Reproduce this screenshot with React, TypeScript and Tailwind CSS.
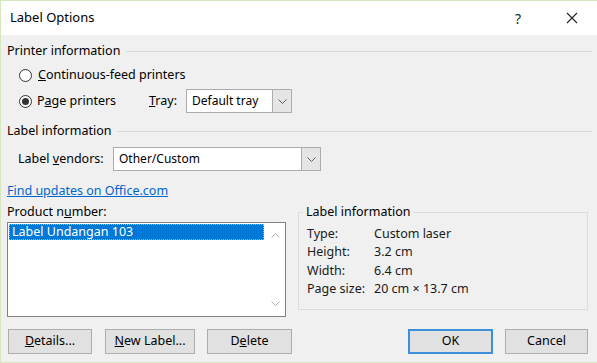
import React from 'react';

const font = { fontFamily: '"Noto Sans", "Open Sans", sans-serif' };

const Chevron: React.FC<{ up?: boolean; color?: string }> = ({ up, color = '#606060' }) => (
  <svg width="9" height="5" viewBox="0 0 9 5" fill="none">
    <path d={up ? 'M0.5 4.5 L4.5 0.5 L8.5 4.5' : 'M0.5 0.5 L4.5 4.5 L8.5 0.5'} stroke={color} strokeWidth="1" />
  </svg>
);

const Combo: React.FC<{ value: string; width: string }> = ({ value, width }) => (
  <div className={`flex h-[24px] ${width} border border-[#acacac] bg-white`}>
    <div className="flex flex-1 items-center pl-[5px] text-[12px] text-black">{value}</div>
    <div className="flex w-[19px] items-center justify-center border-l border-[#acacac] bg-[#e5e5e5]">
      <Chevron />
    </div>
  </div>
);

const Radio: React.FC<{ checked?: boolean }> = ({ checked }) => (
  <span className="flex h-[13px] w-[13px] items-center justify-center rounded-full border border-[#333333] bg-white">
    {checked && <span className="h-[7px] w-[7px] rounded-full bg-[#333333]" />}
  </span>
);

const SectionHeader: React.FC<{ title: string; className?: string }> = ({ title, className = '' }) => (
  <div className={`mr-[-4px] flex h-[16px] items-center ${className}`}>
    <span className="text-[12.5px] text-black">{title}</span>
    <div className="ml-[6px] h-px flex-1 bg-[#dadada]" />
  </div>
);

const Btn: React.FC<{ children: React.ReactNode; width?: string; primary?: boolean }> = ({ children, width = 'w-[85px]', primary }) => (
  <button
    className={`flex h-[25px] ${width} items-center justify-center bg-[#e1e1e1] text-[12.5px] text-black ${
      primary ? 'border-2 border-[#3c8fd8]' : 'border border-[#adadad]'
    }`}
  >
    {children}
  </button>
);

const InfoRow: React.FC<{ label: string; value: string }> = ({ label, value }) => (
  <div className="flex h-[18.5px] items-center text-[12.5px] text-[#1a1a1a]">
    <span className="w-[67px]">{label}</span>
    <span>{value}</span>
  </div>
);

const App: React.FC = () => {
  return (
    <div style={font} className="flex h-[363px] w-[597px] flex-col overflow-hidden border-b border-l border-t border-[#d6e6bf] bg-[#f0f0f0]">
      {/* title bar */}
      <div className="flex h-[34px] shrink-0 items-center bg-white">
        <span className="ml-[9px] text-[13px] text-black">Label Options</span>
        <div className="flex-1" />
        <span className="mr-[45px] text-[14px] text-[#222]">?</span>
        <svg className="mr-[19px]" width="12" height="12" viewBox="0 0 12 12">
          <path d="M1 1 L11 11 M11 1 L1 11" stroke="#222" strokeWidth="1.1" />
        </svg>
      </div>

      <div className="flex flex-1 flex-col pl-[6px] pr-[9px]">
        <SectionHeader title="Printer information" className="mt-[8px]" />

        <div className="mt-[4px] flex h-[24px] items-center pl-[12px] text-[12.5px] text-black">
          <Radio />
          <span className="ml-[6px]">
            <u>C</u>ontinuous-feed printers
          </span>
        </div>
        <div className="mt-[2px] flex h-[24px] items-center pl-[12px] text-[12.5px] text-black">
          <Radio checked />
          <span className="ml-[5px] w-[112px]">
            P<u>a</u>ge printers
          </span>
          <span className="w-[37px]">
            <u>T</u>ray:
          </span>
          <Combo value="Default tray" width="w-[106px]" />
        </div>

        <SectionHeader title="Label information" className="mt-[10px]" />

        <div className="mt-[8px] flex h-[24px] items-center pl-[11px] text-[12.5px] text-black">
          <span className="w-[95px]">
            Label <u>v</u>endors:
          </span>
          <Combo value="Other/Custom" width="w-[208px]" />
        </div>

        <div className="mt-[12px] flex h-[16px] items-center">
          <a className="text-[12.5px] text-[#0066cc] underline">Find updates on Office.com</a>
        </div>

        <div className="mt-[5px] flex gap-[12px]">
          <div className="flex w-[279px] flex-col">
            <div className="flex h-[16px] items-center text-[12.5px] text-black">
              Product n<u>u</u>mber:
            </div>
            <div className="mt-[2px] flex h-[95px] border border-[#828282] bg-white">
              <div className="flex-1 p-px">
                <div className="flex h-[16px] items-center border border-dotted border-[#8fb9e6] bg-[#0078d7] pl-[2px] text-[12.5px] text-white">
                  Label Undangan 103
                </div>
              </div>
              <div className="flex w-[20px] flex-col items-center justify-between py-[10px]">
                <Chevron up color="#b0b0b0" />
                <Chevron color="#b0b0b0" />
              </div>
            </div>
          </div>

          <fieldset className="mt-[-1px] h-[107px] flex-1 border border-[#dcdcdc] pl-[8px] pt-[3px]">
            <legend className="ml-[-4px] px-[3px] text-[12.5px] text-black">Label information</legend>
            <InfoRow label="Type:" value="Custom laser" />
            <InfoRow label="Height:" value="3.2 cm" />
            <InfoRow label="Width:" value="6.4 cm" />
            <InfoRow label="Page size:" value="20 cm × 13.7 cm" />
          </fieldset>
        </div>

        <div className="mt-[12px] flex items-center pl-px">
          <Btn width="w-[84px]">
            <u>D</u>etails...
          </Btn>
          <div className="ml-[13px]">
            <Btn width="w-[90px]">
              <u>N</u>ew Label...
            </Btn>
          </div>
          <div className="ml-[12px]">
            <Btn>
              D<u>e</u>lete
            </Btn>
          </div>
          <div className="flex-1" />
          <Btn primary>OK</Btn>
          <div className="ml-[12px]">
            <Btn width="w-[83px]">Cancel</Btn>
          </div>
        </div>
      </div>
    </div>
  );
};

export default App;
